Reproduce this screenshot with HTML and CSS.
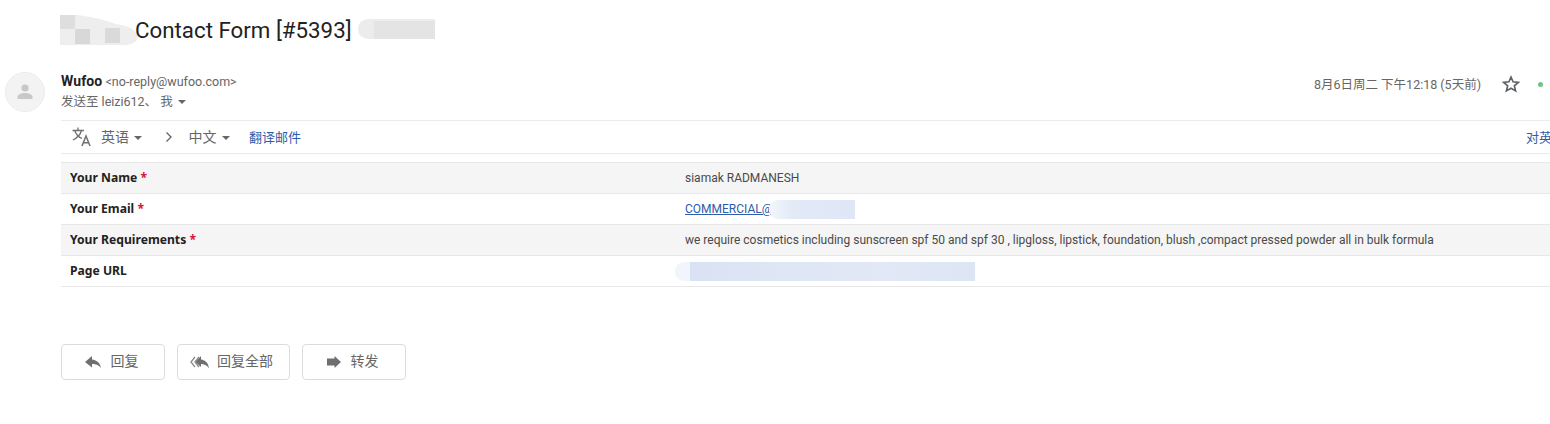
FILE: index.html
```html
<!DOCTYPE html>
<html lang="zh">
<head>
<meta charset="utf-8">
<title>Contact Form</title>
<link rel="stylesheet" href="styles.css">
</head>
<body>
<h1 class="subject">
  <svg class="blot blot-a" width="80" height="32" viewBox="0 0 80 32" aria-hidden="true">
    <path d="M0 1H18Q40 4 56 10Q74 12 78 22Q78 30 66 31H0Z" fill="#eeeeee"/>
    <rect x="0" y="1" width="15" height="14" fill="#dedede"/>
    <rect x="15" y="15" width="15" height="15" fill="#d8d8d8"/>
    <rect x="45" y="14" width="15" height="15" fill="#dadada"/>
  </svg>
  <span class="subject-text">Contact Form [#5393]</span>
  <svg class="blot blot-b" width="77" height="24" viewBox="0 0 77 24" aria-hidden="true">
    <path d="M10 1H77V21H12Q0 20 0 11Q0 2 10 1Z" fill="#ececec"/>
    <rect x="16" y="3" width="61" height="18" fill="#e4e4e4"/>
  </svg>
</h1>

<div class="sender">
  <div class="avatar">
    <svg width="18" height="18" viewBox="0 0 18 18" aria-hidden="true">
      <circle cx="9" cy="5" r="3.600" fill="#c8c8c8"/>
      <path d="M1.500 16V14C1.500 11.200 6 10 9 10S16.500 11.200 16.500 14V16Z" fill="#c8c8c8"/>
    </svg>
  </div>
  <div class="sender-main">
    <div class="sender-top">
      <div class="who">
        <div class="from"><b>Wufoo</b> <span class="addr">&lt;no-reply@wufoo.com&gt;</span></div>
        <div class="to">发送至 leizi612、 我 <i class="caret"></i></div>
      </div>
      <div class="meta">
        <span class="date">8月6日周二 下午12:18 (5天前)</span>
        <svg class="star" width="20" height="20" viewBox="0 0 24 24" aria-hidden="true">
          <path d="M12 3.600l2.500 5.800 6.300.6-4.800 4.100 1.500 6.200L12 17.100l-5.500 3.200L8 14.100 3.200 10l6.300-.6z" fill="none" stroke="#5f6368" stroke-width="2"/>
        </svg>
        <i class="presence"></i>
      </div>
    </div>

    <div class="translate">
      <svg class="tr-icon" width="20" height="20" viewBox="0 0 20 20" aria-hidden="true">
        <path d="M0.500 3.500H12M6 0.500V3.500M9.500 3.500C8.500 7.500 5 11 0.800 13M2.800 3.500C3.800 7 6.500 10 10 11.500" fill="none" stroke="#707070" stroke-width="1.300"/>
        <path d="M10 19L14 9L18 19M11.300 15.800H16.700" fill="none" stroke="#707070" stroke-width="1.500"/>
      </svg>
      <span class="lang lang-src">英语 <i class="caret"></i></span>
      <svg class="chev" width="8" height="12" viewBox="0 0 8 12" aria-hidden="true">
        <path d="M1.500 1.500L6 6L1.500 10.500" fill="none" stroke="#5f6368" stroke-width="1.300"/>
      </svg>
      <span class="lang lang-dst">中文 <i class="caret"></i></span>
      <a class="link tr-link">翻译邮件</a>
      <a class="link tr-side">对英</a>
    </div>

    <div class="form-table">
      <div class="row shaded"><div class="label">Your Name <em>*</em></div><div class="value">siamak RADMANESH</div></div>
      <div class="row"><div class="label">Your Email <em>*</em></div><div class="value"><a class="mail">COMMERCIAL@</a><span class="blur-mail"></span></div></div>
      <div class="row shaded"><div class="label">Your Requirements <em>*</em></div><div class="value">we require cosmetics including sunscreen spf 50 and spf 30 , lipgloss, lipstick, foundation, blush ,compact pressed powder all in bulk formula</div></div>
      <div class="row"><div class="label">Page URL</div><div class="value value-url"><span class="blur-url"></span></div></div>
    </div>

    <div class="actions">
      <button class="btn btn-reply" type="button">
        <svg width="18" height="14" viewBox="0 0 18 14" aria-hidden="true"><path d="M8 1L1 7L8 12.500V9C12 9 15 10 17 13.500C16.500 8.500 13 5 8 4.500Z" fill="#6f6f6f"/></svg>
        <span class="btn-text">回复</span>
      </button>
      <button class="btn btn-all" type="button">
        <svg width="20" height="14" viewBox="0 0 20 14" aria-hidden="true"><path d="M5 2L1 7L5 12" fill="none" stroke="#8a8a8a" stroke-width="1.300"/><path d="M9 2L5 7L9 12" fill="none" stroke="#8a8a8a" stroke-width="1.300"/><path d="M11 1L5.500 7L11 12V9C14 9 17 10 19 13.500C18.500 8.500 15.500 5 11 4.500Z" fill="#6f6f6f"/></svg>
        <span class="btn-text">回复全部</span>
      </button>
      <button class="btn btn-fwd" type="button">
        <svg width="16" height="14" viewBox="0 0 16 14" aria-hidden="true"><path d="M1 3.500H8.500V1L15 7L8.500 13V10.500H1Z" fill="#6f6f6f"/></svg>
        <span class="btn-text">转发</span>
      </button>
    </div>
  </div>
</div>
</body>
</html>
```
FILE: styles.css
```css
* { box-sizing: border-box; }
html, body { margin: 0; padding: 0; background: #fff; overflow: hidden; }
body {
  width: 1550px;
  height: 424px;
  font-family: Roboto, "Noto Sans CJK SC", sans-serif;
  color: #3c4043;
}
.subject {
  display: flex;
  align-items: center;
  height: 60px;
  margin: 0;
  padding-left: 60px;
  padding-bottom: 1px;
  font-weight: 400;
  font-size: 22.300px;
  color: #222;
}
.blot { flex: none; display: block; filter: blur(0.5px); }
.blot-a { margin-top: 1px; margin-right: -5px; }
.subject-text { flex: none; position: relative; }
.blot-b { margin-left: 6px; margin-top: 1px; }

.sender { display: flex; padding-left: 5px; padding-top: 12px; }
.avatar {
  flex: none;
  width: 40px;
  height: 40px;
  border-radius: 50%;
  background: #f3f3f3;
  border: 1px solid #ececec;
  display: flex;
  align-items: center;
  justify-content: center;
  margin-right: 16px;
}
.sender-main { flex: 1; min-width: 0; }
.sender-top { display: flex; justify-content: space-between; height: 48px; }
.from { font-size: 13px; line-height: 19px; color: #444; }
.from b { font-weight: 700; font-size: 14px; color: #222; letter-spacing: 0.1px; }
.addr { font-size: 12.500px; color: #666; }
.to { font-size: 12.500px; line-height: 21px; color: #666; }
.caret {
  display: inline-block;
  width: 0;
  height: 0;
  margin-left: 2px;
  vertical-align: 2px;
  border-left: 4px solid transparent;
  border-right: 4px solid transparent;
  border-top: 4px solid #666;
}
.meta { display: flex; align-items: center; height: 22px; }
.date { font-size: 12.500px; color: #666; }
.star { margin-left: 20px; margin-top: 2px; }
.presence {
  width: 5px;
  height: 5px;
  margin-left: 17px;
  margin-right: 7px;
  margin-top: 2px;
  border-radius: 50%;
  background: #71c287;
}
.translate {
  display: flex;
  align-items: center;
  height: 34px;
  border-top: 1px solid #ebebeb;
  border-bottom: 1px solid #ebebeb;
  padding-left: 11px;
  padding-bottom: 2px;
  font-size: 14px;
  color: #666;
}
.tr-icon { flex: none; margin-top: 2px; }
.lang-src { margin-left: 9px; }
.chev { margin-left: 23px; margin-top: 2px; }
.lang-dst { margin-left: 15px; }
.tr-link { margin-left: 19px; }
.link { color: #2f5bab; font-size: 13px; }
.tr-side { margin-left: auto; width: 24px; white-space: nowrap; overflow: hidden; }

.form-table { margin-top: 8px; border-top: 1px solid #e8e8e8; }
.row {
  display: flex;
  align-items: center;
  height: 31px;
  border-bottom: 1px solid #e8e8e8;
  font-size: 12px;
}
.row.shaded { background: #f5f5f5; }
.label {
  flex: none;
  width: 624px;
  padding-left: 9px;
  padding-bottom: 1px;
  font-family: "Noto Sans", "Open Sans", sans-serif;
  font-weight: 700;
  font-size: 12.150px;
  color: #222;
}
.label em { font-style: normal; color: #dd1133; }
.value { flex: 1; color: #4a4a4a; white-space: nowrap; display: flex; align-items: center; }
.mail { color: #2f5bab; text-decoration: underline; }
.blur-mail {
  display: block;
  width: 86px;
  height: 19px;
  margin-left: -3px;
  background: linear-gradient(90deg, #f3f6fb, #e2e9f7 30%, #dfe7f6);
  border-radius: 9px 0 0 9px;
}
.blur-url {
  display: block;
  width: 300px;
  height: 19px;
  margin-left: -10px;
  background: linear-gradient(90deg, #f2f5fb 0, #f2f5fb 15px, #d9e2f4 15px, #dfe6f5 40%, #e2e8f6 70%, #dde5f5 100%);
  border-radius: 9px 0 0 9px;
}

.actions { display: flex; gap: 12px; margin-top: 57px; }
.btn {
  display: flex;
  align-items: center;
  justify-content: center;
  height: 36px;
  padding: 0 4px 0 0;
  background: #fff;
  border: 1px solid #dcdcdc;
  border-radius: 4px;
  font-family: Roboto, "Noto Sans CJK SC", sans-serif;
  font-size: 14px;
  color: #666;
}
.btn-text { margin-bottom: 4px; }
.btn-reply { width: 104px; gap: 9px; }
.btn-all { width: 113px; gap: 7px; }
.btn-fwd { width: 104px; gap: 9px; }
```
